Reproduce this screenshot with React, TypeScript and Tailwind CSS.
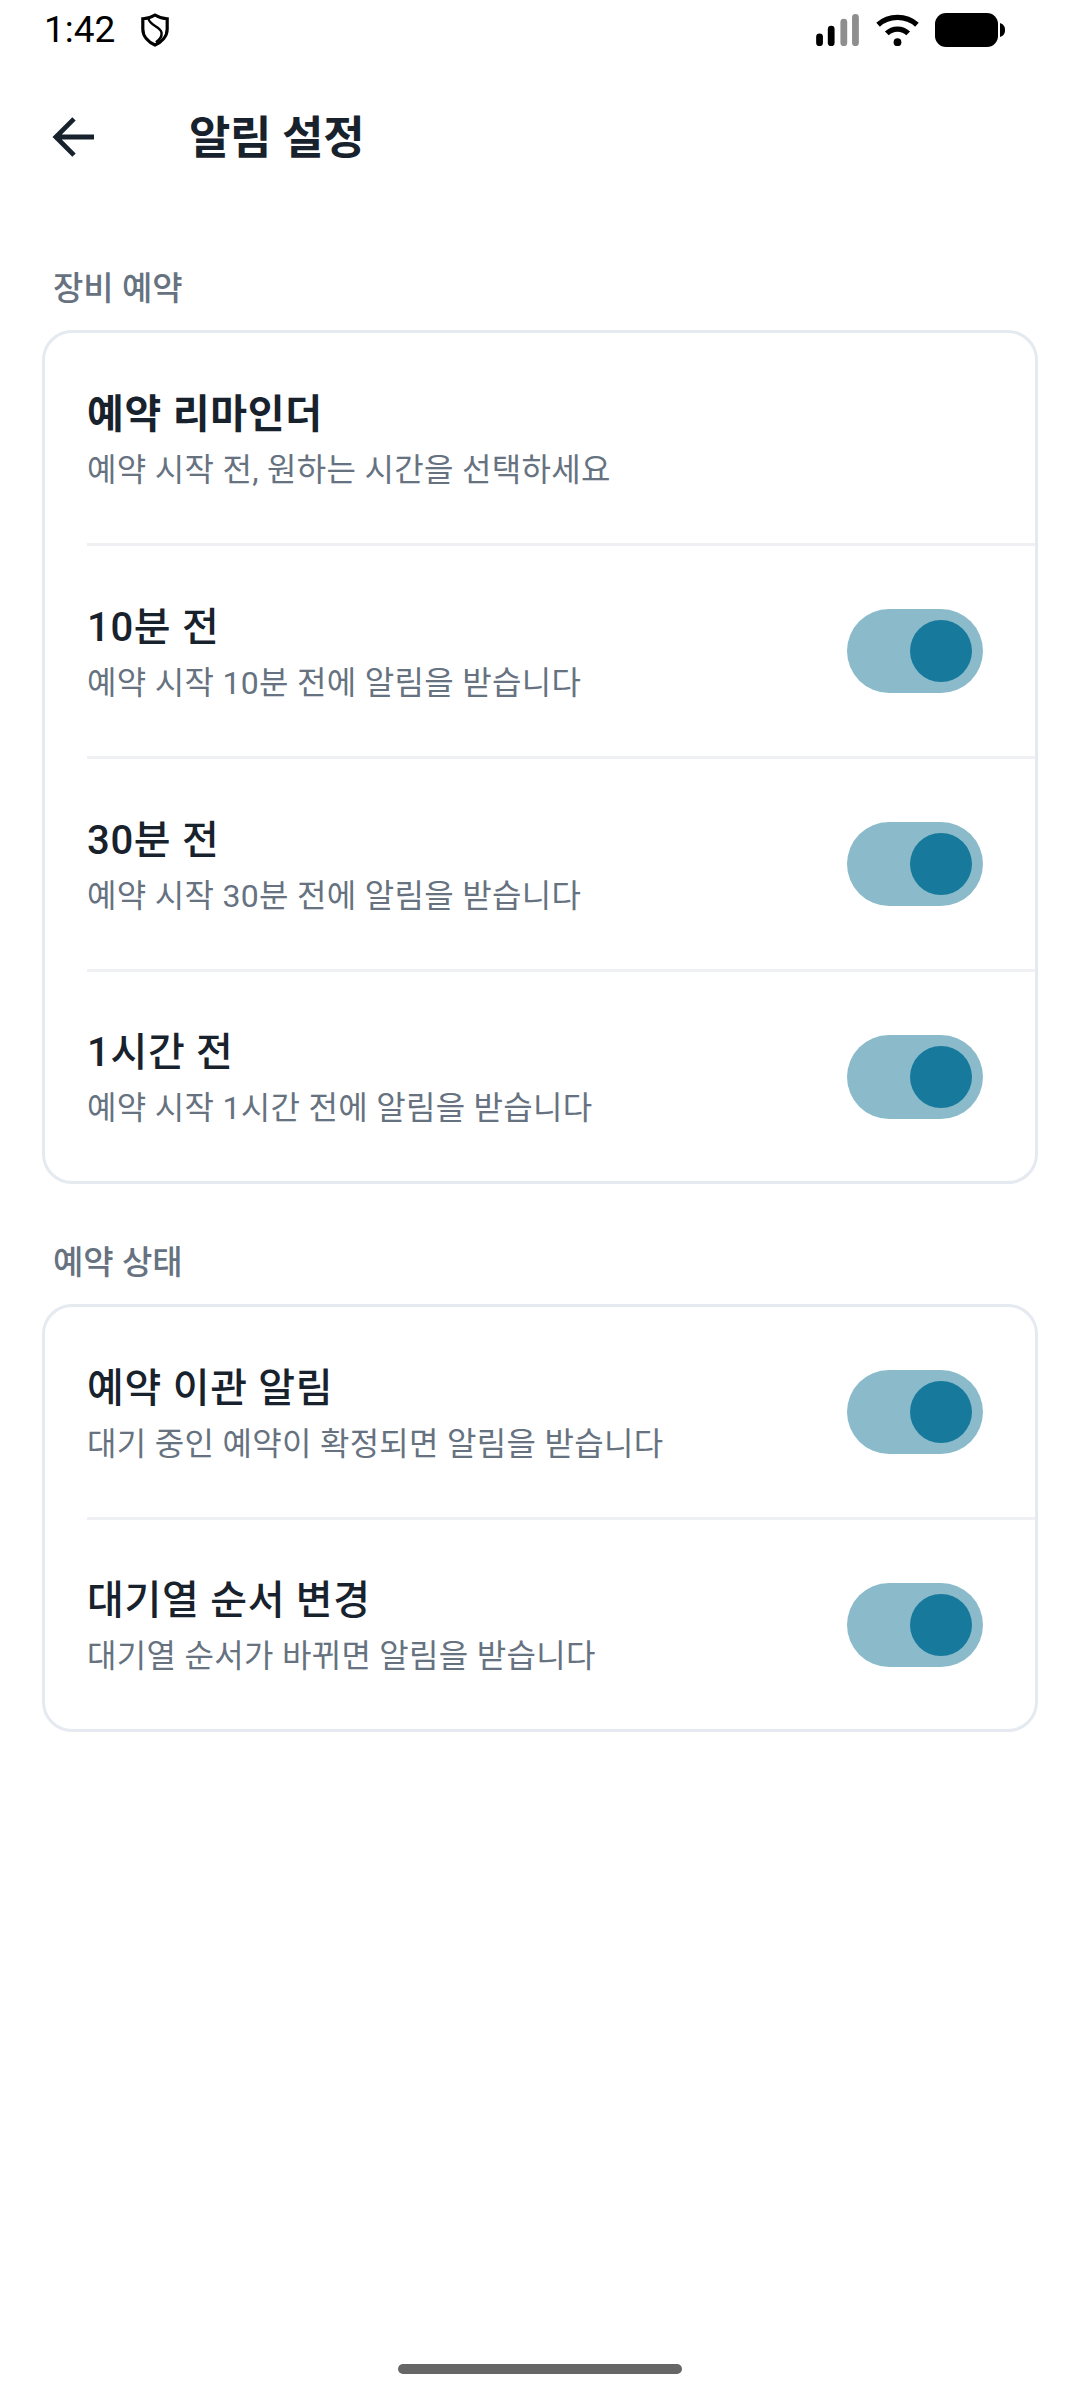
const font = { fontFamily: 'Roboto, "Noto Sans CJK KR", sans-serif' };

function Toggle() {
  return (
    <div className="flex h-[84px] w-[136px] shrink-0 items-center justify-end rounded-full bg-[#8bbbcb] pr-[11px]">
      <div className="h-[62px] w-[62px] rounded-full bg-[#177a9c]" />
    </div>
  );
}

function Row({ title, sub, last, toggle = true, bold }: { title: string; sub: string; last?: boolean; toggle?: boolean; bold?: boolean }) {
  return (
    <div className={`ml-[42px] flex items-center pr-[52px] ${last ? "h-[209px]" : "h-[213px] border-b-[3px] border-[#eef0f4]"}`}>
      <div className="min-w-0 flex-1 pt-[4px]">
        <div className={`text-[#18222d] text-[40px] leading-[52px] tracking-[0.7px] ${bold ? "font-bold" : "font-medium"}`}>{title}</div>
        <div className="mt-[7px] text-[#66727f] text-[32px] leading-[44px] tracking-[0.3px]">{sub}</div>
      </div>
      {toggle && <Toggle />}
    </div>
  );
}

function Section({ label, children }: { label: string; children: React.ReactNode }) {
  return (
    <section>
      <div className="h-[46px] pl-[11px] pt-[4px] text-[33px] font-medium leading-[46px] text-[#66727f]">{label}</div>
      <div className="mt-[22px] overflow-hidden rounded-[30px] border-[3px] border-[#e5e9f0]">{children}</div>
    </section>
  );
}

export default function App() {
  return (
    <div className="relative flex h-[2400px] w-[1080px] flex-col bg-white" style={font}>
      <div className="flex h-[60px] items-center justify-between pl-[44px] pr-[75px]">
        <div className="flex items-center gap-[25px]">
          <span className="text-[37px] leading-[40px] text-black">1:42</span>
          <svg width="30" height="34" viewBox="0 0 32 36" fill="none" stroke="#000" strokeWidth="3.4">
            <path d="M16 2 C 11 5 7 6 3 6 V 17 C 3 25 9 31 16 34 C 23 31 29 25 29 17 V 6 C 25 6 21 5 16 2 Z" />
            <path d="M9 6 C 11 14 22 14 23 21 C 23.5 25 20 29 17 31" strokeWidth="2.6" />
          </svg>
        </div>
        <div className="flex items-center gap-[16px]">
          <svg width="45" height="33" viewBox="0 0 46 34">
            <rect x="1" y="20" width="7" height="13" rx="3.5" fill="#000" />
            <rect x="13" y="12" width="7" height="21" rx="3.5" fill="#000" />
            <rect x="26" y="5" width="7" height="28" rx="3.5" fill="#8e8e8e" />
            <rect x="38" y="0" width="7" height="33" rx="3.5" fill="#8e8e8e" />
          </svg>
          <svg width="43" height="33" viewBox="0 0 44 34" fill="none" stroke="#000" strokeWidth="5.5">
            <path d="M2 11 C 13 1 31 1 42 11" />
            <path d="M11 20 C 17 14 27 14 33 20" />
            <circle cx="22" cy="29" r="4" fill="#000" stroke="none" />
          </svg>
          <svg width="70" height="34" viewBox="0 0 70 34">
            <rect x="0" y="0" width="63" height="34" rx="11" fill="#000" />
            <path d="M65 10 C 68 11 70 13 70 17 C 70 21 68 23 65 24 Z" fill="#000" />
          </svg>
        </div>
      </div>

      <div className="flex h-[154px] items-center pl-[52px]">
        <svg width="44" height="42" viewBox="0 0 46 44" fill="none" stroke="#18222d" strokeWidth="5" className="shrink-0">
          <path d="M44 22 H 4 M 23 3 L 4 22 L 23 41" />
        </svg>
        <h1 className="ml-[93px] pt-[3px] text-[45px] font-bold leading-[60px] tracking-[-0.3px] text-[#18222d]">알림 설정</h1>
      </div>

      <main className="flex flex-col gap-[52px] pl-[42px] pr-[42px] pt-[48px]">
        <Section label="장비 예약">
          <Row title="예약 리마인더" sub="예약 시작 전, 원하는 시간을 선택하세요" toggle={false} bold />
          <Row title="10분 전" sub="예약 시작 10분 전에 알림을 받습니다" />
          <Row title="30분 전" sub="예약 시작 30분 전에 알림을 받습니다" />
          <Row title="1시간 전" sub="예약 시작 1시간 전에 알림을 받습니다" last />
        </Section>
        <Section label="예약 상태">
          <Row title="예약 이관 알림" sub="대기 중인 예약이 확정되면 알림을 받습니다" />
          <Row title="대기열 순서 변경" sub="대기열 순서가 바뀌면 알림을 받습니다" last />
        </Section>
      </main>

      <div className="absolute bottom-[26px] left-1/2 h-[10px] w-[284px] -translate-x-1/2 rounded-full bg-[#666666]" />
    </div>
  );
}
